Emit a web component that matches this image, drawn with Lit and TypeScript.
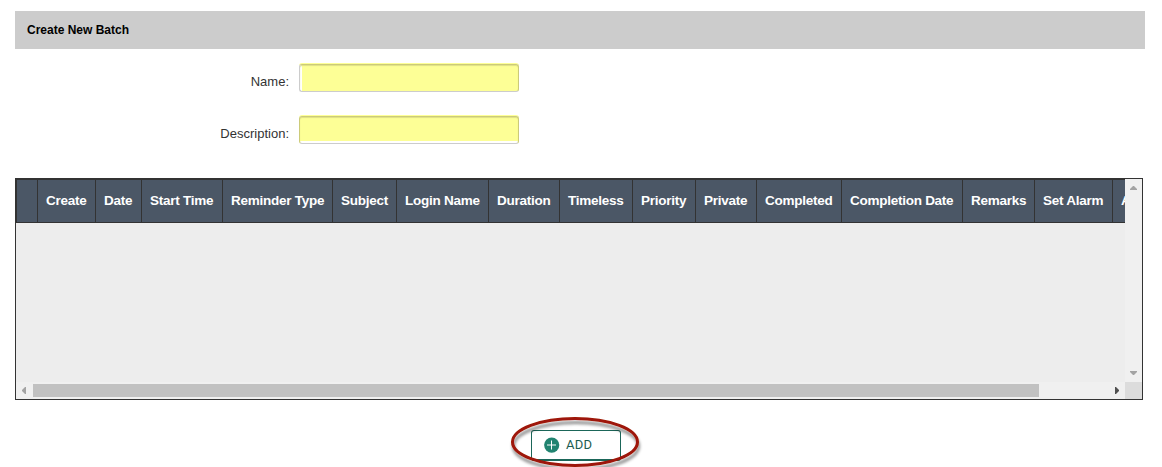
import { LitElement, html, css } from "lit";
import { customElement } from "lit/decorators.js";

const COLUMNS: [string, number][] = [
  ["", 21], ["Create", 58], ["Date", 46], ["Start Time", 81], ["Reminder Type", 110],
  ["Subject", 64], ["Login Name", 92], ["Duration", 71], ["Timeless", 73],
  ["Priority", 63], ["Private", 61], ["Completed", 85], ["Completion Date", 121],
  ["Remarks", 72], ["Set Alarm", 78], ["A", 58],
];

@customElement("batch-grid")
class BatchGrid extends LitElement {
  static styles = css`
    :host { display: grid; box-sizing: border-box; width: 1128px; height: 222px; border: 1px solid #333;
      grid-template-columns: 1109px 17px; grid-template-rows: 203px 17px; background: #f0f0f0; }
    .view { overflow: hidden; background: #ededed; }
    .head { display: flex; box-sizing: border-box; width: max-content; height: 44px; border: 1px solid #333; border-right: 0; background: #4b5766; }
    .cell { box-sizing: border-box; flex: none; border-right: 1px solid #333; padding-left: 8px; line-height: 41px;
      font-weight: bold; font-size: 13.5px; letter-spacing: -0.26px; color: #fff; white-space: nowrap; }
    .vbar { display: flex; flex-direction: column; justify-content: space-between; }
    .hbar { display: flex; align-items: center; }
    .thumb { width: 1006px; height: 13px; background: #c1c1c1; }
    .corner { background: #dcdcdc; }
    svg { display: block; width: 17px; height: 17px; flex: none; }
    .next { margin-left: 69px; }
    .off { fill: #a3a3a3; }
    .on { fill: #505050; }
  `;
  render() {
    return html`
      <div class="view"><div class="head">
        ${COLUMNS.map(([t, w]) => html`<div class="cell" style="width:${w}px">${t}</div>`)}
      </div></div>
      <div class="vbar">
        <svg viewBox="0 0 17 17"><path class="off" d="M5 11V10L8 7H9L12 10V11Z"/></svg>
        <svg viewBox="0 0 17 17"><path class="off" d="M5 6V7L8 10H9L12 7V6Z"/></svg>
      </div>
      <div class="hbar">
        <svg viewBox="0 0 17 17"><path class="off" d="M10 5H9L6 8V9L9 12H10Z"/></svg>
        <div class="thumb"></div>
        <svg class="next" viewBox="0 0 17 17"><path class="on" d="M7 5H8L11 8V9L8 12H7Z"/></svg>
      </div>
      <div class="corner"></div>`;
  }
}

@customElement("app-root")
class AppRoot extends LitElement {
  static styles = css`
    :host { display: block; box-sizing: border-box; width: 1162px; height: 467px; overflow: hidden; padding: 11px 17px 0 15px;
      background: #fff; font-family: "Liberation Sans", Arial, sans-serif; }
    .title { box-sizing: border-box; height: 38px; padding-left: 12px; background: #ccc; font-size: 12px; font-weight: bold; line-height: 39px; color: #000; }
    .form { display: grid; grid-template-columns: 274px 220px; column-gap: 10px; row-gap: 24px; padding-top: 15px; margin-bottom: 34px; }
    .label { text-align: right; font-size: 13px; line-height: 35px; height: 28px; color: #333; }
    .field { display: block; box-sizing: border-box; width: 220px; height: 28px; margin: 0; border: 1px solid #cccb79; border-radius: 3px; outline: 0;
      background: #fdff96; box-shadow: 0 -1px 0 #fdff96, inset 0 1px 1px #dfe085; }
    .name { border-left-color: #ccc; border-bottom-color: #ccc; background: linear-gradient(90deg, #fff 2px, #fdff96 2px); }
    .desc { border-bottom-color: #ccc; background: linear-gradient(#fdff96 24px, #fff 24px); }
    .actions { position: relative; display: flex; padding: 30px 0 0 516px; }
    .add { display: flex; align-items: center; box-sizing: border-box; width: 90px; height: 31px; margin: 0; padding: 0 0 0 12px;
      border: 1px solid #1b6659; border-bottom-width: 2px; border-radius: 3px; background: #fff; color: #1c5c51;
      font: 400 13px Roboto, sans-serif; letter-spacing: .2px; }
    .add span { padding-bottom: 2px; }
    .plus { width: 16px; height: 16px; margin-right: 6px; }
    .ring { position: absolute; left: 487px; top: 9px; width: 150px; height: 62px; pointer-events: none; }
  `;
  render() {
    return html`
      <div class="title">Create New Batch</div>
      <div class="form">
        <label class="label" for="n">Name:</label><input id="n" class="field name">
        <label class="label" for="d">Description:</label><input id="d" class="field desc">
      </div>
      <batch-grid></batch-grid>
      <div class="actions">
        <button class="add">
          <svg class="plus" viewBox="0 0 16 16"><circle cx="7.7" cy="8.1" r="7.6" fill="#218370"/><path d="M7.5 3.5V12.5M3 8H12" stroke="#fff" stroke-width="1"/></svg>
          <span>ADD</span>
        </button>
        <svg class="ring" viewBox="0 0 150 62">
          <defs><filter id="s" x="-10%" y="-20%" width="125%" height="150%"><feDropShadow dx="1" dy="4" stdDeviation="1.8" flood-color="#000" flood-opacity=".45"/></filter></defs>
          <ellipse cx="73" cy="33" rx="62.5" ry="23.5" fill="none" stroke="#9e1707" stroke-width="3" filter="url(#s)"/>
        </svg>
      </div>`;
  }
}
